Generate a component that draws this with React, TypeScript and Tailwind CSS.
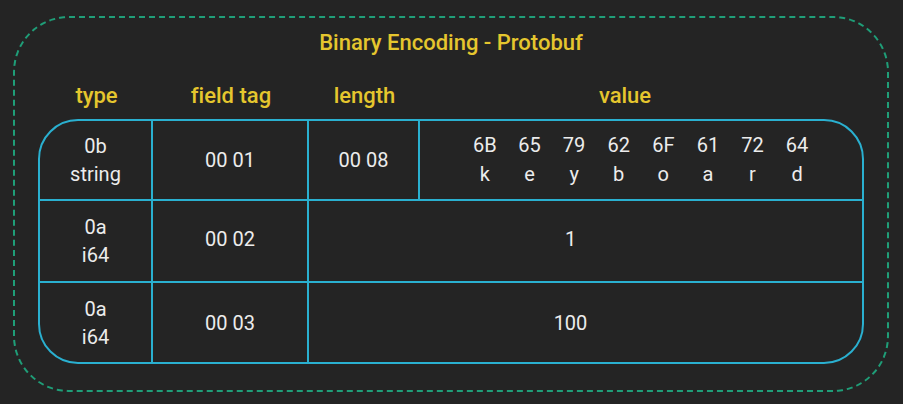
import React from 'react';

const hex = [
  ['6B', 'k'],
  ['65', 'e'],
  ['79', 'y'],
  ['62', 'b'],
  ['6F', 'o'],
  ['61', 'a'],
  ['72', 'r'],
  ['64', 'd'],
];

const cols = 'grid grid-cols-[113px_156px_111px_1fr]';

export default function App() {
  return (
    <div
      className="w-[903px] h-[404px] bg-[#242424] pt-[16px] pl-[13px] [font-variant-ligatures:none]"
      style={{ fontFamily: 'Roboto, "Noto Sans", sans-serif' }}
    >
      <div className="w-[876px] h-[376px] border-2 border-dashed border-[#1f9e78] rounded-[56px] pt-[11px] px-[23px]">
        <div className="text-center text-[#e5c62e] text-[22px] leading-[28px] font-medium">
          Binary Encoding - Protobuf
        </div>

        {/* column headers */}
        <div className={`${cols} mt-[25px] px-[2px] text-[#e5c62e] text-[22px] leading-[28px] font-medium text-center`}>
          <div>type</div>
          <div>field tag</div>
          <div>length</div>
          <div className="pr-[32px]">value</div>
        </div>

        {/* table */}
        <div className="mt-[9px] border-2 border-[#2ab0d0] rounded-[40px] overflow-hidden text-[#ececec] text-[20px] leading-[28px] text-center">
          <div className={`${cols} h-[80px] border-b-2 border-[#2ab0d0]`}>
            <div className="flex flex-col items-center justify-center border-r-2 border-[#2ab0d0]">
              <span>0b</span>
              <span>string</span>
            </div>
            <div className="flex items-center justify-center border-r-2 border-[#2ab0d0]">00 01</div>
            <div className="flex items-center justify-center border-r-2 border-[#2ab0d0]">00 08</div>
            <div className="flex items-center justify-center leading-[29px]">
              {hex.map(([h, c]) => (
                <div key={h} className="w-[44.6px] flex flex-col items-center">
                  <span>{h}</span>
                  <span>{c}</span>
                </div>
              ))}
            </div>
          </div>

          <div className={`${cols} h-[82px] border-b-2 border-[#2ab0d0]`}>
            <div className="flex flex-col items-center justify-center border-r-2 border-[#2ab0d0]">
              <span>0a</span>
              <span>i64</span>
            </div>
            <div className="flex items-center justify-center border-r-2 border-[#2ab0d0] pb-[4px]">00 02</div>
            <div className="col-span-2 flex items-center justify-center pb-[4px] pr-[30px]">1</div>
          </div>

          <div className={`${cols} h-[79px]`}>
            <div className="flex flex-col items-center justify-center border-r-2 border-[#2ab0d0]">
              <span>0a</span>
              <span>i64</span>
            </div>
            <div className="flex items-center justify-center border-r-2 border-[#2ab0d0]">00 03</div>
            <div className="col-span-2 flex items-center justify-center pr-[30px]">100</div>
          </div>
        </div>
      </div>
    </div>
  );
}
